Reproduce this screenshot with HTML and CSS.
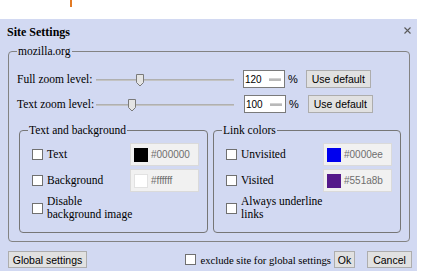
FILE: index.html
```html
<!DOCTYPE html>
<html>
<head>
<meta charset="utf-8">
<title>Site Settings</title>
<link rel="stylesheet" href="styles.css">
</head>
<body>
<div class="marker"></div>
<div class="dialog">
  <div class="titlebar">
    <span class="title">Site Settings</span>
    <svg class="close" width="7" height="7" viewBox="0 0 7 7"><path d="M0.5 0.5L6.5 6.5M6.5 0.5L0.5 6.5" stroke="#5a5a5a" stroke-width="1.1"/></svg>
  </div>
  <fieldset class="site">
    <legend>mozilla.org</legend>
    <div class="zoomrow">
      <span class="zlabel">Full zoom level:</span>
      <svg class="slider" width="138" height="16" viewBox="0 0 138 16">
        <rect x="0" y="8" width="138" height="2" fill="#c3c3c3"/>
        <rect x="0" y="8" width="138" height="1" fill="#b0b0b0"/>
        <path d="M40.5 3.5h7v8l-3.5 3.5l-3.5-3.5z" fill="#e4e4e4" stroke="#7a7a7a"/>
      </svg>
      <div class="num"><span>120</span><i class="spin"></i></div>
      <span class="pct">%</span>
      <button class="btn usedef">Use default</button>
    </div>
    <div class="zoomrow second">
      <span class="zlabel">Text zoom level:</span>
      <svg class="slider" width="138" height="16" viewBox="0 0 138 16">
        <rect x="0" y="8" width="138" height="2" fill="#c3c3c3"/>
        <rect x="0" y="8" width="138" height="1" fill="#b0b0b0"/>
        <path d="M32.5 3.5h7v8l-3.5 3.5l-3.5-3.5z" fill="#e4e4e4" stroke="#7a7a7a"/>
      </svg>
      <div class="num"><span>100</span><i class="spin"></i></div>
      <span class="pct">%</span>
      <button class="btn usedef">Use default</button>
    </div>
    <div class="groups">
      <fieldset class="group left">
        <legend>Text and background</legend>
        <div class="crow">
          <span class="cb"></span><span class="clabel">Text</span>
          <div class="swatch"><i class="sq black"></i><span>#000000</span></div>
        </div>
        <div class="crow">
          <span class="cb"></span><span class="clabel">Background</span>
          <div class="swatch"><i class="sq white"></i><span>#ffffff</span></div>
        </div>
        <div class="crow tall">
          <span class="cb"></span><span class="clabel">Disable<br>background image</span>
        </div>
      </fieldset>
      <fieldset class="group right">
        <legend>Link colors</legend>
        <div class="crow">
          <span class="cb"></span><span class="clabel">Unvisited</span>
          <div class="swatch"><i class="sq blue"></i><span>#0000ee</span></div>
        </div>
        <div class="crow">
          <span class="cb"></span><span class="clabel">Visited</span>
          <div class="swatch"><i class="sq purple"></i><span>#551a8b</span></div>
        </div>
        <div class="crow tall">
          <span class="cb"></span><span class="clabel">Always underline<br>links</span>
        </div>
      </fieldset>
    </div>
  </fieldset>
  <div class="footer">
    <button class="btn global">Global settings</button>
    <div class="exclude"><span class="cb"></span><span class="flabel">exclude site for global settings</span></div>
    <button class="btn ok">Ok</button>
    <button class="btn cancel">Cancel</button>
  </div>
</div>
</body>
</html>
```
FILE: styles.css
```css
* { box-sizing: border-box; }
html, body { margin: 0; padding: 0; background: #fff; }
body {
  width: 444px;
  height: 274px;
  overflow: hidden;
  position: relative;
  font-family: "Liberation Serif", "Times New Roman", serif;
  font-size: 11.5px;
  color: #000;
}
.marker {
  position: absolute;
  left: 70px;
  top: 0;
  width: 2px;
  height: 7px;
  background: #e27a24;
}
.dialog {
  margin-top: 19px;
  width: 417px;
  height: 252px;
  background: #d2d9f2;
  display: flex;
  flex-direction: column;
}
.titlebar {
  height: 25px;
  flex-shrink: 0;
  display: flex;
  align-items: center;
  justify-content: space-between;
  padding: 0 6px 0 7px;
}
.title {
  font-weight: bold;
  font-size: 12px;
  line-height: 14px;
}
.close { align-self: flex-start; margin-top: 8px; }
fieldset { margin: 0; min-width: 0; }
legend { padding: 0 1px; font-size: 11.5px; line-height: 14px; }
.site {
  margin: 0 7px 0 8px;
  padding: 0 8px 8px 8px;
  border: 1px solid #838383;
  border-radius: 4px;
}
.zoomrow {
  display: flex;
  align-items: center;
  height: 18px;
  margin-top: 12px;
}
.zoomrow.second { margin-top: 7px; }
.zlabel { width: 79px; flex-shrink: 0; white-space: nowrap; }
.slider { flex-shrink: 0; display: block; }
.num {
  margin-left: 9px;
  width: 42px;
  height: 18px;
  border: 1px solid #7a7a7a;
  background: #fff;
  display: flex;
  align-items: center;
  padding: 0 2px 0 1px;
  font-family: "Liberation Sans", Arial, sans-serif;
  font-size: 10px;
}
.second .num { margin-left: 10px; }
.spin {
  margin-left: auto;
  margin-right: 1px;
  width: 12px;
  height: 3px;
  background: #b9b9b9;
  border-top: 1px solid #d2d2d2;
}
.pct {
  margin-left: 3px;
  font-family: "Liberation Sans", Arial, sans-serif;
  font-size: 11px;
}
.btn {
  height: 18px;
  padding: 0;
  border: 1px solid #adadad;
  background: #e1e1e1;
  color: #000;
  font-family: "Liberation Sans", Arial, sans-serif;
  font-size: 10.5px;
  text-align: center;
  flex-shrink: 0;
}
.usedef { margin-left: 8px; width: 65px; }
.second .usedef { margin-left: 9px; }
.groups {
  display: flex;
  gap: 5px;
  margin: 10px 0 0 2px;
}
.group {
  padding: 6px 8px 11px 8px;
  border: 1px solid #767676;
  border-radius: 4px;
}
.group.left { width: 189px; }
.group.right { width: 188px; }
.crow {
  display: flex;
  align-items: center;
  height: 23px;
  padding-left: 4px;
}
.crow + .crow { margin-top: 3px; }
.crow.tall { height: 26px; }
.cb {
  width: 11px;
  height: 11px;
  border: 1px solid #707070;
  background: #fff;
  flex-shrink: 0;
}
.clabel { margin-left: 4px; line-height: 13px; }
.swatch {
  margin-left: auto;
  width: 69px;
  height: 23px;
  background: #f1f1f1;
  border: 1px solid #dadada;
  display: flex;
  align-items: center;
  gap: 3px;
  padding-left: 3px;
  font-family: "Liberation Sans", Arial, sans-serif;
  font-size: 10px;
  color: #6e6e6e;
}
.sq { width: 14px; height: 14px; display: block; }
.sq.black { background: #000000; }
.sq.white { background: #ffffff; border: 1px solid #e2e2e2; }
.sq.blue { background: #0000ee; }
.sq.purple { background: #551a8b; }
.footer {
  display: flex;
  align-items: center;
  margin-top: 9px;
  padding: 0 5px 0 8px;
  height: 17px;
}
.footer .btn { height: 17px; }
.global { width: 79px; }
.exclude {
  margin-left: auto;
  display: flex;
  align-items: center;
}
.flabel { margin-left: 4px; white-space: nowrap; font-size: 10.7px; }
.ok { margin-left: 3px; width: 21px; }
.cancel { margin-left: 12px; width: 45px; }
```
